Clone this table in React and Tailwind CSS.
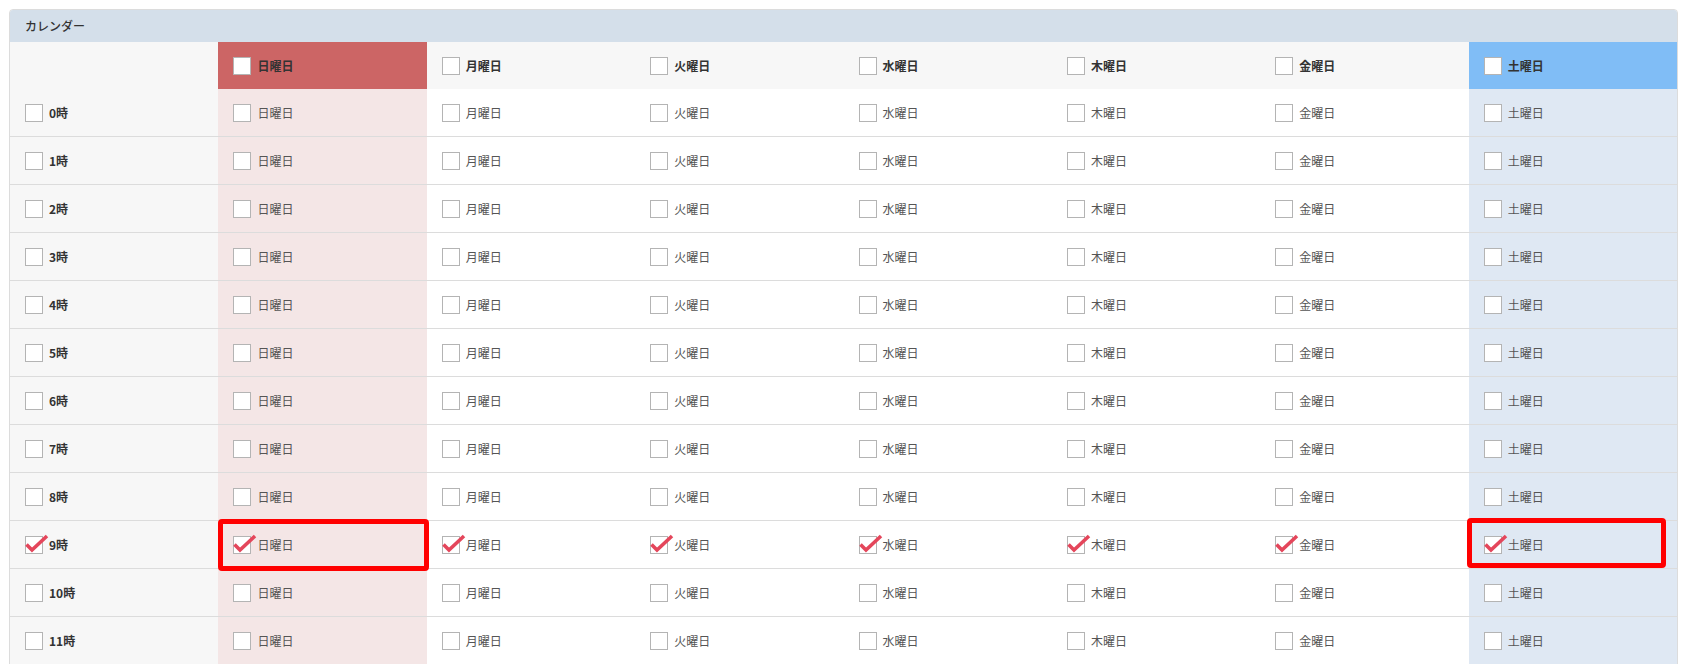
const days = [
  { label: "日曜日", head: "bg-[#cc6565]", body: "bg-[#f4e6e6]" },
  { label: "月曜日", head: "bg-[#f7f7f7]", body: "bg-white" },
  { label: "火曜日", head: "bg-[#f7f7f7]", body: "bg-white" },
  { label: "水曜日", head: "bg-[#f7f7f7]", body: "bg-white" },
  { label: "木曜日", head: "bg-[#f7f7f7]", body: "bg-white" },
  { label: "金曜日", head: "bg-[#f7f7f7]", body: "bg-white" },
  { label: "土曜日", head: "bg-[#80bdf6]", body: "bg-[#dfe8f3]" },
];

const hours = Array.from({ length: 12 }, (_, i) => i);

function Box({ checked }) {
  return (
    <span className="relative block w-[18px] h-[18px] shrink-0 border border-[#b4b4b4] bg-white">
      {checked && (
        <svg className="absolute left-[-1px] top-[-4px]" width="26" height="22" viewBox="0 0 26 22">
          <path d="M1.5 11.5 L7 17 L22 3" fill="none" stroke="#e4465b" strokeWidth="3.6" />
        </svg>
      )}
    </span>
  );
}

function Cell({ checked, label, className, bold, children }) {
  return (
    <div className={`relative flex items-center gap-[6px] pl-[15px] ${className}`}>
      <Box checked={checked} />
      <span className={bold ? "font-bold text-[#333]" : "text-[#555]"}>{label}</span>
      {children}
    </div>
  );
}

export default function App() {
  return (
    <div className="min-h-screen bg-white pt-[9px] pl-[9px] text-[12px] leading-none" style={{ fontFamily: '"Noto Sans CJK JP", "Noto Sans", sans-serif' }}>
      <div className="w-[1669px] border border-[#dcdcdc] rounded-t-[4px] overflow-hidden">
        <div className="h-[32px] bg-[#d4dfea] flex items-center pl-[15px] font-medium text-[#333]">
          カレンダー
        </div>
        <div className="grid grid-cols-8 h-[47px]">
          <div className="bg-[#f7f7f7]" />
          {days.map((d) => (
            <Cell key={d.label} label={d.label} bold className={d.head} />
          ))}
        </div>
        {hours.map((h) => {
          const on = h === 9;
          return (
            <div key={h} className="grid grid-cols-8 h-[48px] border-b border-[#dcdcdc] box-border">
              <Cell checked={on} label={`${h}時`} bold className="bg-[#f7f7f7]" />
              {days.map((d, i) => (
                <Cell key={d.label} checked={on} label={d.label} className={d.body}>
                  {on && i === 0 && (
                    <div className="absolute z-10 left-0 -right-[2px] -top-[2px] -bottom-[3px] border-[5px] border-[#ff0000] rounded-[4px]" />
                  )}
                  {on && i === 6 && (
                    <div className="absolute z-10 -left-[2px] right-[11px] -top-[3px] bottom-0 border-[5px] border-[#ff0000] rounded-[4px]" />
                  )}
                </Cell>
              ))}
            </div>
          );
        })}
      </div>
    </div>
  );
}
